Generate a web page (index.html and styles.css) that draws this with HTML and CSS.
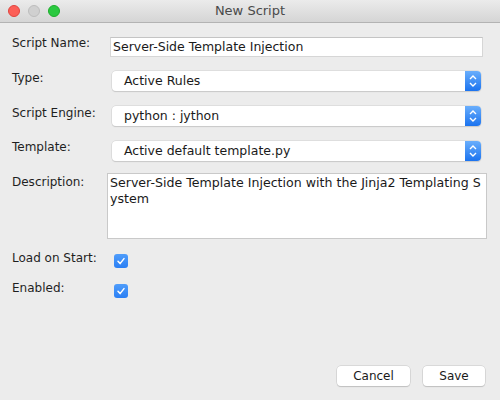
FILE: index.html
```html
<!DOCTYPE html>
<html>
<head>
<meta charset="utf-8">
<link rel="stylesheet" href="styles.css">
</head>
<body>
<div class="window">
  <div class="titlebar">
    <div class="lights">
      <span class="light red"></span>
      <span class="light gray"></span>
      <span class="light green"></span>
    </div>
    <div class="title">New Script</div>
  </div>
  <div class="content">
    <div class="row r-name">
      <label class="lbl">Script Name:</label>
      <div class="field">Server-Side Template Injection</div>
    </div>
    <div class="row r-type">
      <label class="lbl">Type:</label>
      <div class="combo"><span class="combo-text">Active Rules</span><span class="combo-btn"><svg width="16" height="20" viewBox="0 0 16 20"><path d="M5 8 L8 5 L11 8" fill="none" stroke="#fff" stroke-width="1.4"/><path d="M5 12 L8 15 L11 12" fill="none" stroke="#fff" stroke-width="1.4"/></svg></span></div>
    </div>
    <div class="row r-engine">
      <label class="lbl">Script Engine:</label>
      <div class="combo"><span class="combo-text">python : jython</span><span class="combo-btn"><svg width="16" height="20" viewBox="0 0 16 20"><path d="M5 8 L8 5 L11 8" fill="none" stroke="#fff" stroke-width="1.4"/><path d="M5 12 L8 15 L11 12" fill="none" stroke="#fff" stroke-width="1.4"/></svg></span></div>
    </div>
    <div class="row r-template">
      <label class="lbl">Template:</label>
      <div class="combo"><span class="combo-text">Active default template.py</span><span class="combo-btn"><svg width="16" height="20" viewBox="0 0 16 20"><path d="M5 8 L8 5 L11 8" fill="none" stroke="#fff" stroke-width="1.4"/><path d="M5 12 L8 15 L11 12" fill="none" stroke="#fff" stroke-width="1.4"/></svg></span></div>
    </div>
    <div class="row r-desc">
      <label class="lbl lbl-desc">Description:</label>
      <div class="textarea">Server-Side Template Injection with the Jinja2 Templating S<br>ystem</div>
    </div>
    <div class="row r-load">
      <label class="lbl lbl-check">Load on Start:</label>
      <span class="check"><svg width="14" height="14" viewBox="0 0 14 14"><path d="M4 7.2 L6.1 9.6 L10 4.6" fill="none" stroke="#fff" stroke-width="1.5" stroke-linecap="round" stroke-linejoin="round"/></svg></span>
    </div>
    <div class="row r-enabled">
      <label class="lbl lbl-check">Enabled:</label>
      <span class="check"><svg width="14" height="14" viewBox="0 0 14 14"><path d="M4 7.2 L6.1 9.6 L10 4.6" fill="none" stroke="#fff" stroke-width="1.5" stroke-linecap="round" stroke-linejoin="round"/></svg></span>
    </div>
    <div class="buttons">
      <button class="btn btn-cancel">Cancel</button>
      <button class="btn btn-save">Save</button>
    </div>
  </div>
</div>
</body>
</html>
```
FILE: styles.css
```css
* { box-sizing: border-box; }
html, body {
  margin: 0;
  padding: 0;
  width: 500px;
  height: 400px;
  overflow: hidden;
  background: #ececec;
  font-family: "DejaVu Sans", "Liberation Sans", sans-serif;
  font-size: 12px;
  color: #1a1a1a;
}
.window {
  width: 500px;
  height: 400px;
  display: flex;
  flex-direction: column;
}
.titlebar {
  height: 23px;
  flex: 0 0 23px;
  background: linear-gradient(#ebebeb, #d5d5d5);
  border-bottom: 1px solid #b3b3b3;
  display: flex;
  align-items: center;
  position: relative;
}
.lights {
  display: flex;
  gap: 8px;
  padding-left: 8px;
}
.light {
  width: 12px;
  height: 12px;
  border-radius: 50%;
  display: block;
}
.light.red { background: #fc5f57; border: 0.5px solid #e0443e; }
.light.gray { background: #d0d0d0; border: 0.5px solid #bdbdbd; }
.light.green { background: #2ac940; border: 0.5px solid #1dad2b; }
.title {
  position: absolute;
  left: 0;
  right: 0;
  top: 0;
  line-height: 22px;
  text-align: center;
  font-size: 13px;
  color: #4a4a4a;
}
.content {
  flex: 1;
  display: flex;
  flex-direction: column;
  padding: 0 12px 14px 12px;
}
.row {
  display: flex;
  align-items: flex-start;
}
.lbl {
  width: 98px;
  flex: 0 0 98px;
  line-height: 16px;
  margin-top: -2px;
  color: #1f1f1f;
}
.r-name { margin-top: 14px; }
.r-type { margin-top: 14px; }
.r-engine { margin-top: 15px; }
.r-template { margin-top: 15px; }
.r-desc { margin-top: 12px; }
.r-load { margin-top: 11px; }
.r-enabled { margin-top: 12px; }
.r-type .lbl, .r-engine .lbl { margin-top: -1px; }
.lbl-desc { margin-top: 1px; }
.lbl-check { margin-top: 0; }

.field {
  flex: 1;
  margin-right: 5px;
  height: 20px;
  background: #fff;
  border: 1px solid #d6d6d6;
  border-top-color: #c4c4c4;
  padding: 0 2px;
  line-height: 18px;
  font-size: 12.5px;
  white-space: nowrap;
  overflow: hidden;
}
.combo {
  flex: 1;
  margin: 0 7px 0 2px;
  height: 20px;
  display: flex;
  background: #fff;
  border-radius: 4px;
  box-shadow: 0 0 0 0.5px #cfcfcf, 0 1px 1px rgba(0,0,0,0.18);
}
.combo-text {
  flex: 1;
  padding-left: 12px;
  line-height: 20px;
  font-size: 12.5px;
  white-space: nowrap;
}
.combo-btn {
  width: 16px;
  height: 20px;
  border-radius: 0 4px 4px 0;
  background: linear-gradient(#69aefc, #1b73ef);
  display: flex;
}
.combo-btn svg { display: block; }
.textarea {
  flex: 1;
  margin-left: -3px;
  margin-right: 1px;
  height: 66px;
  background: #fff;
  border: 1px solid #c9c9c9;
  padding: 1px 2px;
  line-height: 16px;
  font-size: 12.6px;
  white-space: nowrap;
}
.check {
  margin-top: 4px;
  margin-left: 4px;
  width: 14px;
  height: 14px;
  border-radius: 3px;
  background: linear-gradient(#4f9dfb, #2a7ff4);
  display: block;
}
.check svg { display: block; }
.buttons {
  margin-top: auto;
  display: flex;
  justify-content: flex-end;
  gap: 13px;
  padding-right: 3px;
}
.btn {
  height: 20px;
  background: #fff;
  border: none;
  border-radius: 4px;
  box-shadow: 0 0 0 0.5px #c6c6c6, 0 1px 1px rgba(0,0,0,0.2);
  font-family: "DejaVu Sans", "Liberation Sans", sans-serif;
  font-size: 12px;
  color: #1a1a1a;
  padding: 0;
  line-height: 20px;
}
.btn-cancel { width: 73px; }
.btn-save { width: 62px; }
```
